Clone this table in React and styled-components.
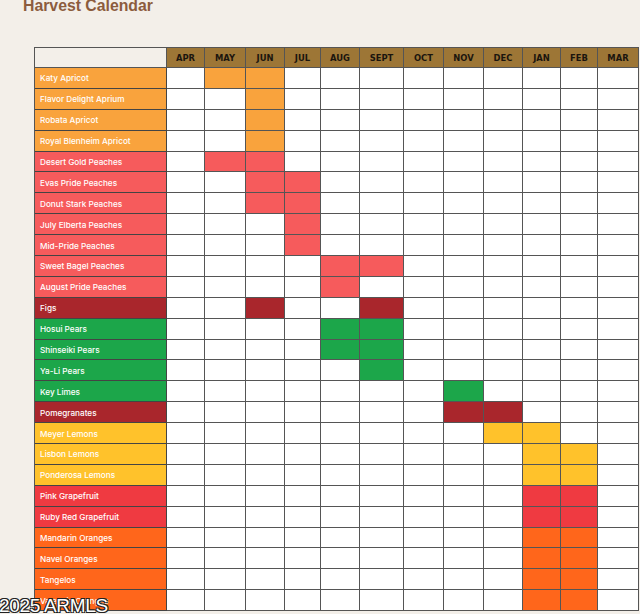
import styled, { createGlobalStyle } from "styled-components"

const months = ["APR", "MAY", "JUN", "JUL", "AUG", "SEPT", "OCT", "NOV", "DEC", "JAN", "FEB", "MAR"]
const widths = [38, 41, 39, 36, 39, 44, 40, 40, 39, 38, 37, 41]

const colors = {
  apricot: "#f9a33d",
  peach: "#f65b5c",
  fig: "#a9262c",
  green: "#1ca64a",
  lemon: "#ffc22b",
  grapefruit: "#ef3a41",
  orange: "#ff661b",
}

const rows = [
  ["Katy Apricot", "apricot", ["MAY", "JUN"]],
  ["Flavor Delight Aprium", "apricot", ["JUN"]],
  ["Robata Apricot", "apricot", ["JUN"]],
  ["Royal Blenheim Apricot", "apricot", ["JUN"]],
  ["Desert Gold Peaches", "peach", ["MAY", "JUN"]],
  ["Evas Pride Peaches", "peach", ["JUN", "JUL"]],
  ["Donut Stark Peaches", "peach", ["JUN", "JUL"]],
  ["July Elberta Peaches", "peach", ["JUL"]],
  ["Mid-Pride Peaches", "peach", ["JUL"]],
  ["Sweet Bagel Peaches", "peach", ["AUG", "SEPT"]],
  ["August Pride Peaches", "peach", ["AUG"]],
  ["Figs", "fig", ["JUN", "SEPT"]],
  ["Hosui Pears", "green", ["AUG", "SEPT"]],
  ["Shinseiki Pears", "green", ["AUG", "SEPT"]],
  ["Ya-Li Pears", "green", ["SEPT"]],
  ["Key Limes", "green", ["NOV"]],
  ["Pomegranates", "fig", ["NOV", "DEC"]],
  ["Meyer Lemons", "lemon", ["DEC", "JAN"]],
  ["Lisbon Lemons", "lemon", ["JAN", "FEB"]],
  ["Ponderosa Lemons", "lemon", ["JAN", "FEB"]],
  ["Pink Grapefruit", "grapefruit", ["JAN", "FEB"]],
  ["Ruby Red Grapefruit", "grapefruit", ["JAN", "FEB"]],
  ["Mandarin Oranges", "orange", ["JAN", "FEB"]],
  ["Navel Oranges", "orange", ["JAN", "FEB"]],
  ["Tangelos", "orange", ["JAN", "FEB"]],
  ["Valencia Oranges", "orange", ["JAN", "FEB"]],
]

export default function App() {
  return (
    <Page>
      <GlobalStyle />
      <Title>Harvest Calendar</Title>
      <Calendar>
        <Corner />
        {months.map(m => <MonthHead key={m}>{m}</MonthHead>)}
        {rows.map(([name, kind, on]) => [
          <Label key={name} $bg={colors[kind]}>{name}</Label>,
          ...months.map(m => (
            <Cell key={name + m} $bg={on.includes(m) ? colors[kind] : "#fff"} />
          )),
        ])}
      </Calendar>
      <Watermark>2025 ARMLS</Watermark>
    </Page>
  )
}

const GlobalStyle = createGlobalStyle`
  * { box-sizing: border-box; }
  body {
    margin: 0;
    background: #f3efe9;
    font-family: "Inter", "Liberation Sans", sans-serif;
  }
`

const Page = styled.div`
  position: relative;
  width: 640px;
  height: 614px;
  overflow: hidden;
  background: #f3efe9;
`

const Title = styled.h1`
  margin: -3px 0 0 23px;
  height: 50px;
  font-family: "Liberation Sans", sans-serif;
  font-size: 15.8px;
  font-weight: 700;
  line-height: 18px;
  color: #8c5c3d;
`

const Calendar = styled.div`
  margin-left: 34px;
  display: grid;
  grid-template-columns: 132px ${widths.map(w => w + "px").join(" ")};
  grid-template-rows: 20px repeat(26, 20.9px);
  border-top: 1px solid #555;
  border-left: 1px solid #555;
  width: 605px;
`

const Corner = styled.div`
  background: #f3efe9;
  border-right: 1px solid #555;
  border-bottom: 1px solid #555;
`

const MonthHead = styled.div`
  background: #9d7636;
  border-right: 1px solid #555;
  border-bottom: 1px solid #555;
  display: flex;
  align-items: center;
  justify-content: center;
  font-family: "DejaVu Sans", sans-serif;
  font-size: 8.4px;
  font-weight: 800;
  color: #1b150e;
`

const Label = styled.div`
  background: ${p => p.$bg};
  border-right: 1px solid #444;
  border-bottom: 1px solid #444;
  display: flex;
  align-items: center;
  padding: 1px 0 0 5px;
  font-size: 8.2px;
  font-weight: 500;
  color: #fff;
  white-space: nowrap;
`

const Cell = styled.div`
  background: ${p => p.$bg};
  border-right: 1px solid #555;
  border-bottom: 1px solid #555;
`

const Watermark = styled.div`
  position: absolute;
  left: -1px;
  bottom: -3px;
  font-family: "Liberation Sans", sans-serif;
  font-size: 19px;
  letter-spacing: -0.3px;
  color: #fff;
  text-shadow: -1px -1px 0 #222, 1px -1px 0 #222, -1px 1px 0 #222, 1px 1px 0 #222;
`
